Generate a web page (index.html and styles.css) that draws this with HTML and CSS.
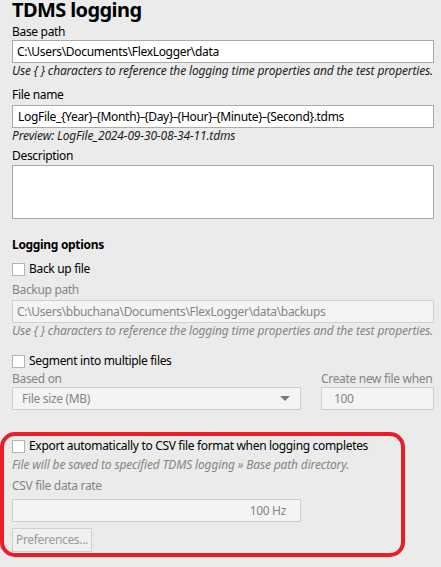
FILE: index.html
```html
<!DOCTYPE html>
<html>
<head>
<meta charset="utf-8">
<link rel="stylesheet" href="styles.css">
</head>
<body>
<div class="page">
  <h1 class="title">TDMS logging</h1>

  <div class="label lbl-base">Base path</div>
  <div class="input">C:\Users\Documents\FlexLogger\data</div>
  <div class="hint">Use { } characters to reference the logging time properties and the test properties.</div>

  <div class="label lbl-file">File name</div>
  <div class="input input-file">LogFile_{Year}-{Month}-{Day}-{Hour}-{Minute}-{Second}.tdms</div>
  <div class="hint">Preview: LogFile_2024-09-30-08-34-11.tdms</div>

  <div class="label lbl-desc">Description</div>
  <div class="textarea"></div>

  <div class="section-title">Logging options</div>

  <div class="check-row row-backup"><span class="box"></span><span>Back up file</span></div>
  <div class="label disabled lbl-backup">Backup path</div>
  <div class="input disabled">C:\Users\bbuchana\Documents\FlexLogger\data\backups</div>
  <div class="hint disabled">Use { } characters to reference the logging time properties and the test properties.</div>

  <div class="check-row row-segment"><span class="box"></span><span>Segment into multiple files</span></div>
  <div class="split">
    <div class="col-left">
      <div class="label disabled">Based on</div>
      <div class="input disabled combo"><span class="combo-text">File size (MB)</span><span class="arrow"></span></div>
    </div>
    <div class="col-right">
      <div class="label disabled">Create new file when</div>
      <div class="input disabled number">100</div>
    </div>
  </div>

  <div class="csv">
    <div class="highlight"></div>
    <div class="check-row"><span class="box"></span><span>Export automatically to CSV file format when logging completes</span></div>
    <div class="hint disabled hint-csv">File will be saved to specified TDMS logging » Base path directory.</div>
    <div class="label disabled lbl-rate">CSV file data rate</div>
    <div class="input disabled rate">100 Hz</div>
    <div class="button">Preferences...</div>
  </div>
</div>
</body>
</html>
```

FILE: styles.css
```css
html, body {
  margin: 0;
  padding: 0;
  background: #ebebeb;
}

body {
  font-family: "Noto Sans", "Open Sans", sans-serif;
  font-size: 12px;
  line-height: 16px;
  letter-spacing: -0.32px;
  color: #000;
  width: 441px;
  height: 567px;
  overflow: hidden;
}

.page {
  padding: 0 7px 0 12px;
}

.title {
  margin: 0;
  font-size: 20px;
  line-height: 20px;
  font-weight: 700;
  letter-spacing: -0.6px;
}

.label {
  height: 16px;
  white-space: nowrap;
}

.lbl-base { margin-top: 4px; }
.lbl-file { margin-top: 8px; margin-bottom: 2px; }
.lbl-desc { margin-top: 4px; margin-bottom: 1px; }
.lbl-backup { margin-top: 5px; margin-bottom: 2px; }

.input {
  box-sizing: border-box;
  height: 23px;
  background: #fff;
  border: 1px solid #ababab;
  padding: 0 4px;
  line-height: 21px;
  white-space: nowrap;
  overflow: hidden;
}

.input-file { padding-left: 5px; }

.hint {
  font-style: italic;
  color: #1e1e1e;
  white-space: nowrap;
  letter-spacing: -0.15px;
}

.textarea {
  box-sizing: border-box;
  height: 54px;
  background: #fff;
  border: 1px solid #ababab;
}

.section-title {
  margin-top: 18px;
  font-weight: 700;
  height: 16px;
}

.check-row {
  display: flex;
  align-items: center;
  gap: 4px;
  height: 16px;
  white-space: nowrap;
}

.row-backup { margin-top: 8px; }
.row-segment { margin-top: 14px; }

.box {
  box-sizing: border-box;
  width: 13px;
  height: 13px;
  background: #fff;
  border: 1px solid #b4b4b4;
  flex: none;
}

.disabled {
  color: #858585;
}

.input.disabled {
  background: #f4f4f4;
  border-color: #cfcfcf;
}

.hint.disabled {
  color: #858585;
}

.split {
  display: flex;
  gap: 20px;
  margin-top: 2px;
}

.col-left { width: 289px; }
.col-right { flex: 1; }

.combo {
  display: flex;
  align-items: center;
  justify-content: space-between;
  padding: 0 10px 0 9px;
}

.arrow {
  width: 0;
  height: 0;
  border-left: 5px solid transparent;
  border-right: 5px solid transparent;
  border-top: 5px solid #7a7a7a;
}

.number { padding-left: 12px; }

.csv {
  position: relative;
  margin-top: 28px;
}

.highlight {
  position: absolute;
  left: -12px;
  top: -6px;
  width: 405px;
  height: 125px;
  box-sizing: border-box;
  border: 4px solid #ed1c24;
  border-radius: 15px;
  pointer-events: none;
}

.hint-csv { margin-top: 3px; }
.lbl-rate { margin-top: 5px; margin-bottom: 5px; }

.rate {
  width: 289px;
  text-align: right;
  padding-right: 14px;
}

.button {
  box-sizing: border-box;
  margin-top: 6px;
  width: 80px;
  height: 24px;
  border: 1px solid #cfcfcf;
  background: #f0f0f0;
  color: #9a9a9a;
  line-height: 22px;
  text-align: center;
}
```
